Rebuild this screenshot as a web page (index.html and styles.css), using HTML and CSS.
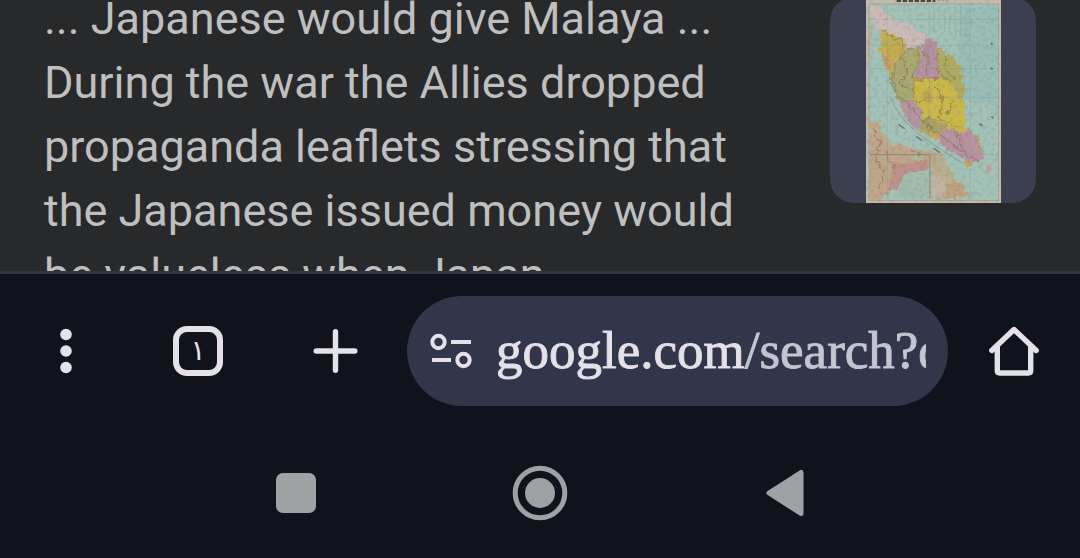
FILE: index.html
```html
<!DOCTYPE html>
<html lang="en">

<head>
    <meta charset="UTF-8">
    <meta name="viewport" content="width=device-width, initial-scale=1.0">
    <title>Search</title>
    <link rel="stylesheet" href="styles.css">
</head>

<body>
    <main class="results">
        <article class="result">
            <p class="snippet">... Japanese would give Malaya ... During the war the Allies dropped propaganda leaflets stressing that the Japanese issued money would be valueless when Japan</p>
            <div class="thumb">
                <svg class="map" viewBox="138 -9 405 618" role="img" aria-label="Map of Malaya">
                    <defs>
                        <filter id="rough" x="-5%" y="-5%" width="110%" height="110%" color-interpolation-filters="sRGB">
                            <feTurbulence type="fractalNoise" baseFrequency="0.06" numOctaves="3" seed="4" result="n"/>
                            <feDisplacementMap in="SourceGraphic" in2="n" scale="26" xChannelSelector="R" yChannelSelector="G"/>
                            <feGaussianBlur stdDeviation="2"/>
                        </filter>
                        <filter id="paper" x="0" y="0" width="100%" height="100%" color-interpolation-filters="sRGB">
                            <feTurbulence type="fractalNoise" baseFrequency="0.08" numOctaves="3" seed="9"/>
                            <feColorMatrix values="0 0 0 0 .4  0 0 0 0 .3  0 0 0 0 .25  2.4 0 0 0 -1.1"/>
                        </filter>
                    </defs>
                    <rect x="138" y="-9" width="405" height="618" fill="#c3bcae"/>
                    <rect x="147" y="12" width="388" height="588" fill="#a3c2b8"/>
                    <path d="M420 20h115v300l-100-20-20-110z" fill="#99bfb8"/>
                    <g filter="url(#rough)">
                        <path d="M182 82l60 30 76 20 40 14 44 24 26 42 4 90 2 86 40 24 12 40-20 26-56-12-50-40-56-28-50-50-24-54-18-60-26-60z" fill="#b5aa68"/>
                        <!-- Siam -->
                        <path d="M150 14l32 8 40 40 50 12 38 26 30 22-14 18-30 16-44-4-34-46-38-10-30-38z" fill="#cbbcba"/>
                        <!-- Kedah and Perak -->
                        <path d="M182 82l18 12 34 14 26 26-12 34-20 16-12 36-20-12-4-34-14-28 10-22z" fill="#c4ae55"/>
                        <path d="M186 165l26 8 6 24-18 10z" fill="#c79a69"/>
                        <path d="M250 152l46-8 8 22-4 36-14 24 0 46-12 34-36 2-16-38-4-36 22-42z" fill="#a9a973"/>
                        <!-- Kelantan -->
                        <path d="M304 136l24-22 26 12-2 28 8 64-10 22-36-2-38 2 18-32 12-40z" fill="#b592a0"/>
                        <!-- Trengganu -->
                        <path d="M352 146l48 22 28 40 6 66-10 34-20-18-12-34-36-34z" fill="#aead63"/>
                        <!-- Pahang -->
                        <path d="M276 238l40-6 36 4 20-4 26 22 8 32 24 22 6 86-14 6-48-10-36-36-40-2-12-50z" fill="#cbb94c"/>
                        <path d="M304 278l24-4 10 20-24 6z" fill="#bca354"/>
                        <!-- Selangor and Negri Sembilan -->
                        <path d="M236 304l40 2 30 24 2 40-14 20-24-16-14-36z" fill="#b694a4"/>
                        <path d="M300 358l42 2 40 14-14 40-36-6-28-22z" fill="#a9a26a"/>
                        <path d="M318 392l48 8-4 24-28-8z" fill="#c4a75e"/>
                        <!-- Johore -->
                        <path d="M364 390l34-8 24 18 24-16 22 30 12 34 10 28-18 10-30-2-28-20-34-14-20-22z" fill="#b993a2"/>
                        <path d="M430 482l32 2-6 16-18-4z" fill="#bfa75f"/>
                        <path d="M496 494l16 4 4 22-14-4z" fill="#b9a5a0"/>
                        <!-- Sumatra -->
                        <path d="M148 362l20 2 24 34 16 34 40 2 44 14 46 4-4 50-68-4-28 16-20 52-38 34-32 2z" fill="#c0a78b"/>
                        <path d="M224 490l46-6 58-4v26l-62 14-30 50-32-6z" fill="#bd928a"/>
                        <path d="M334 460l34-4 20 50 30 42 32 34-8 14-108 2z" fill="#b8ae90"/>
                        <path d="M378 556l30-14 34 30-4 20-60 4z" fill="#bca27e"/>
                        <path d="M272 466l24-8 20 20-24 8z" fill="#b0b798"/>
                        <path d="M148 80l6 10 0 60-6 4z" fill="#b9b1a2"/>
                    </g>
                    <path d="M252 524l74-6v74l-106 2z" fill="#a3bcae"/>
                    <path d="M334 528h42v60h-42z" fill="#c1b3a4"/>
                    <g filter="url(#rough)" fill="none" stroke="#7d7050" stroke-width="4" opacity=".55">
                        <path d="M186 82l20 26 40 14 4 40-28 44-6 42 18 42 30 20 50 60 60 44 70 54 28 12"/>
                        <path d="M256 150l44-8-8 50-14 40M350 154l6 66 40 22M276 240l50-6 46 2M280 242l4 60h50M306 362l40-10 50 20 30 14"/>
                        <path d="M250 170l10 50-20 30 30 20M380 170l-4 40 34 30M310 150l14 30-6 40M340 250l30 40-10 50M400 300l-20 40M404 386l14 30 14 40"/>
                        <path d="M160 390l20 40-14 50 30 40-20 50M210 440l-8 40 30 30M270 450l30 20"/>
                    </g>
                    <g stroke="#6f8e89" stroke-width="2" opacity=".35" fill="none">
                        <path d="M147 58h388M147 136h388M147 206h388M147 292h388M147 464h388"/>
                        <path d="M202 12v588M328 12v588M450 12v588"/>
                        <path d="M342 20v74M358 20v64M374 24v72M390 20v84M406 26v80M422 20v92M438 24v86"/>
                    </g>
                    <path d="M236 374l142 96" stroke="#5e7776" stroke-width="4" stroke-dasharray="22 42"/>
                    <path d="M210 290q28 70 98 120t118 78" fill="none" stroke="#84a49d" stroke-width="3"/>
                    <path d="M148 464h182v132" fill="none" stroke="#8a7c67" stroke-width="2"/>
                    <path d="M512 130l6 3M512 205l6 3M478 372l9 4M514 350l6 3" stroke="#58716f" stroke-width="5"/>
                    <rect x="147" y="12" width="388" height="590" fill="none" stroke="#a0978a" stroke-width="2"/>
                    <path d="M230 1h116" stroke="#4c463f" stroke-width="10" stroke-dasharray="13 5"/>
                    <path d="M354 0h34" stroke="#8b8378" stroke-width="4" stroke-dasharray="6 5"/>
                    <rect x="138" y="-9" width="405" height="618" filter="url(#paper)" opacity=".16"/>
                </svg>
            </div>
        </article>
    </main>

    <header class="toolbar">
        <button class="tool" aria-label="Menu">
            <svg width="50" height="50" viewBox="0 0 50 50" fill="currentColor">
                <circle cx="25" cy="8.500" r="5.800"/>
                <circle cx="25" cy="25" r="5.800"/>
                <circle cx="25" cy="41.500" r="5.800"/>
            </svg>
        </button>
        <button class="tool" aria-label="Open tabs">
            <span class="tab-count">١</span>
        </button>
        <button class="tool" aria-label="New tab">
            <svg width="50" height="50" viewBox="0 0 50 50" fill="none" stroke="currentColor" stroke-width="5.400" stroke-linecap="round">
                <path d="M24.500 5.700v38.600M5.200 25h38.600"/>
            </svg>
        </button>
        <form class="address">
            <button class="site-info" type="button" aria-label="Site information">
                <svg width="42" height="36" viewBox="0 0 42 36" fill="none" stroke="currentColor" stroke-width="4">
                    <circle cx="8.500" cy="9" r="6.200"/>
                    <path d="M21 9h20M2 27h19"/>
                    <circle cx="33.500" cy="27" r="6.200"/>
                </svg>
            </button>
            <input class="url" type="text" aria-label="Address" value="google.com/search?q">
        </form>
        <button class="tool" aria-label="Home">
            <svg width="52" height="52" viewBox="0 0 52 52" fill="none" stroke="currentColor" stroke-width="5.400" stroke-linejoin="round" stroke-linecap="round">
                <path d="M3.800 25.500L26 4.500l22.200 21"/>
                <path d="M9.300 22v23.500q0 2.500 2.500 2.500h28.400q2.500 0 2.500-2.500V22"/>
            </svg>
        </button>
    </header>

    <nav class="system-nav">
        <button class="nav-key" aria-label="Recent apps">
            <svg width="56" height="56" viewBox="0 0 56 56" fill="currentColor">
                <rect x="8" y="8" width="40" height="40" rx="7"/>
            </svg>
        </button>
        <button class="nav-key" aria-label="Home screen">
            <svg width="56" height="56" viewBox="0 0 56 56" fill="currentColor">
                <circle cx="28" cy="28" r="24.800" fill="none" stroke="currentColor" stroke-width="5"/>
                <circle cx="28" cy="28" r="15"/>
            </svg>
        </button>
        <button class="nav-key" aria-label="Back">
            <svg width="56" height="56" viewBox="0 0 56 56" fill="currentColor" stroke="currentColor" stroke-width="5" stroke-linejoin="round">
                <path d="M13 28L45 7.500v41z"/>
            </svg>
        </button>
    </nav>
</body>

</html>
```

FILE: styles.css
```css
* {
    box-sizing: border-box;
}

body {
    margin: 0;
    height: 100vh;
    display: flex;
    flex-direction: column;
    background: #10131b;
    color: #e4e1e8;
    font-family: Roboto, sans-serif;
}

button {
    display: flex;
    justify-content: center;
    align-items: center;
    padding: 0;
    border: 0;
    background: none;
    color: inherit;
    font: inherit;
    cursor: pointer;
}

/* page content, scrolled so the first and last lines are cut */
.results {
    flex: 1;
    min-height: 0;
    overflow: hidden;
    background: #28292b;
    border-bottom: 3px solid #32343e;
}

.result {
    display: flex;
    justify-content: space-between;
    align-items: flex-start;
    margin-top: -13px;
    padding: 0 44px;
}

.snippet {
    flex: 1;
    max-width: 700px;
    margin: 0;
    color: #bfbfbf;
    font-size: 45px;
    line-height: 64px;
}

.thumb {
    display: flex;
    justify-content: center;
    width: 206px;
    height: 206px;
    margin-top: 10px;
    border-radius: 24px;
    background: #3b3f4f;
    overflow: hidden;
}

.map {
    height: 100%;
}

/* browser bar */
.toolbar {
    display: grid;
    grid-template-columns: 132px 132px 143px 1fr 132px;
    align-items: center;
    padding: 22px 0;
}

.tool {
    height: 110px;
}

.tab-count {
    display: flex;
    justify-content: center;
    align-items: center;
    width: 50px;
    height: 50px;
    border: 6px solid;
    border-radius: 14px;
    font-family: "DejaVu Sans", sans-serif;
    font-size: 28px;
    line-height: 38px;
}

.address {
    display: flex;
    align-items: center;
    gap: 24px;
    min-width: 0;
    height: 110px;
    padding: 0 22px 0 23px;
    border-radius: 55px;
    background: #32364a;
}

.url {
    flex: 1;
    min-width: 0;
    height: 70px;
    padding: 0 0 2px;
    border: 0;
    outline: 0;
    /* host is bright, the path after it is dimmed */
    background: linear-gradient(to right, #e4e1e8 248px, #c5c5d2 248px);
    -webkit-background-clip: text;
    background-clip: text;
    color: transparent;
    -webkit-text-stroke: 1px transparent;
    font-family: "Liberation Serif", serif;
    font-size: 53px;
}

/* system keys */
.system-nav {
    display: flex;
    justify-content: center;
    height: 130px;
    color: #a0a1a5;
}

.nav-key {
    width: 244px;
    height: 130px;
}
```
